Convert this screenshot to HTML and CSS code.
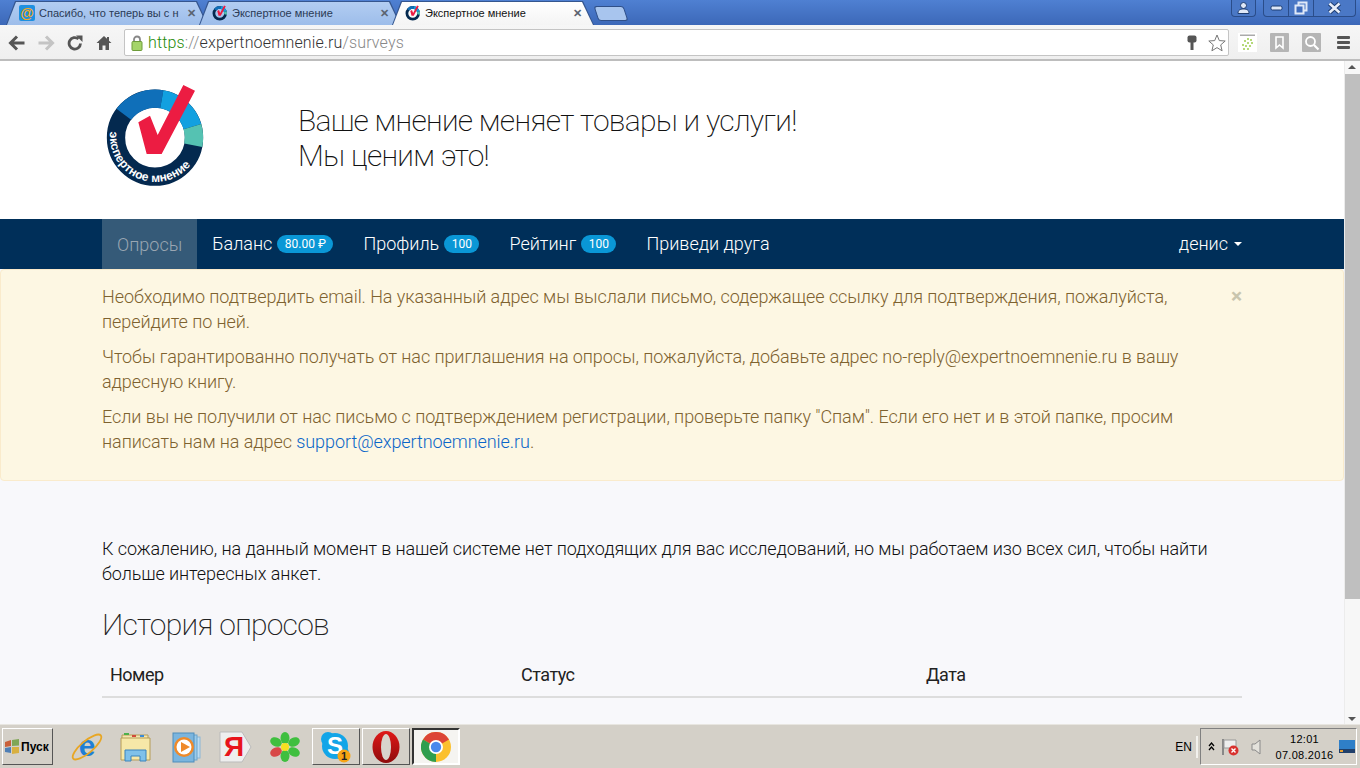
FILE: index.html
```html
<!DOCTYPE html>
<html lang="ru">
<head>
<meta charset="utf-8">
<title>Экспертное мнение</title>
<link rel="stylesheet" href="styles.css">
</head>
<body>
<svg class="defs" width="0" height="0">
  <symbol id="mark" viewBox="45 25 310 320">
    <circle cx="195" cy="191" r="117" fill="none" stroke="#04294f" stroke-width="55"/>
    <path d="M101.3 121A117 117 0 0 1 215.4 75.8" fill="none" stroke="#0f6fb9" stroke-width="55"/>
    <path d="M215.4 75.8A117 117 0 0 1 307.3 158" fill="none" stroke="#12a0e0" stroke-width="55"/>
    <path d="M307.3 158A117 117 0 0 1 309.9 213.4" fill="none" stroke="#55c2b2" stroke-width="55"/>
    <polygon points="145,145 180,125 203,183 280,33 315,50 215,240 170,240" fill="#ec1c42"/>
  </symbol>
  <linearGradient id="opera" x1="0" y1="0" x2="0" y2="1">
    <stop offset="0" stop-color="#e01818"/>
    <stop offset="1" stop-color="#8e0c0c"/>
  </linearGradient>
</svg>

<div class="tabstrip">
  <div class="tab">
    <span class="fav-mail">@</span>
    <span class="tab-title">Спасибо, что теперь вы с н</span>
    <span class="tab-x">✕</span>
  </div>
  <div class="tab">
    <svg class="fav"><use href="#mark"/></svg>
    <span class="tab-title">Экспертное мнение</span>
    <span class="tab-x">✕</span>
  </div>
  <div class="tab tab-active">
    <svg class="fav"><use href="#mark"/></svg>
    <span class="tab-title">Экспертное мнение</span>
    <span class="tab-x">✕</span>
  </div>
  <div class="tab-new"></div>
  <div class="win-spacer"></div>
  <div class="win-btn win-user">
    <svg width="13" height="12" viewBox="0 0 13 12"><circle cx="6.5" cy="3.5" r="3" fill="#dfe8f7" stroke="#1d3c70"/><path d="M1 11.5c0-3.5 2-4.5 5.500-4.500s5.500 1 5.500 4.500z" fill="#dfe8f7" stroke="#1d3c70"/></svg>
  </div>
  <div class="win-group">
    <div class="win-btn win-min"><svg width="13" height="6" viewBox="0 0 13 6"><rect x="1" y="1" width="11" height="4" rx="1.500" fill="#dfe8f7" stroke="#1d3c70"/></svg></div>
    <div class="win-btn win-max"><svg width="14" height="14" viewBox="0 0 14 14"><rect x="4.500" y="1.500" width="8" height="8" fill="none" stroke="#dfe8f7" stroke-width="2"/><rect x="1.500" y="4.500" width="8" height="8" fill="#3f6cbc" stroke="#dfe8f7" stroke-width="2"/></svg></div>
    <div class="win-btn win-close"><svg width="15" height="12" viewBox="0 0 15 12"><path d="M2.500 1.500l10 9M12.500 1.500l-10 9" stroke="#1d3c70" stroke-width="4.500"/><path d="M2.500 1.500l10 9M12.500 1.500l-10 9" stroke="#e6edf9" stroke-width="2.500"/></svg></div>
  </div>
</div>

<div class="toolbar">
  <svg class="tool-ic" width="18" height="16" viewBox="0 0 18 16"><path d="M9 1.500L2.500 8 9 14.500M3 8h13.500" fill="none" stroke="#555" stroke-width="3"/></svg>
  <svg class="tool-ic" width="18" height="16" viewBox="0 0 18 16"><path d="M9 1.500L15.500 8 9 14.500M15 8H1.500" fill="none" stroke="#c4c4c4" stroke-width="3"/></svg>
  <svg class="tool-ic" width="18" height="16" viewBox="0 0 18 16"><path d="M14.500 8.500A5.700 5.700 0 1 1 12.500 4" fill="none" stroke="#555" stroke-width="2.800"/><polygon points="10,0.500 16.500,0.500 16.500,7" fill="#555"/></svg>
  <svg class="tool-ic" width="18" height="16" viewBox="0 0 18 16"><path d="M9 1L1.500 8H4v7h3.500v-4.500h3V15H14V8h2.500L14 5.700V2h-2v1.800z" fill="#555"/></svg>
  <div class="omnibox">
    <svg class="lock" width="12" height="16" viewBox="0 0 12 16"><path d="M3 7V4.500a3 3 0 0 1 6 0V7" fill="none" stroke="#888" stroke-width="1.800"/><rect x="1" y="6.500" width="10" height="9" rx="1" fill="#a5d46a" stroke="#6e9c3a"/></svg>
    <span class="url"><span class="url-https">https</span><span class="url-path">://</span><span class="url-host">expertnoemnenie.ru</span><span class="url-path">/surveys</span></span>
    <svg class="omni-key" width="10" height="16" viewBox="0 0 10 16"><rect x="0.500" y="0.500" width="9" height="7" rx="2" fill="#555"/><rect x="3.500" y="6" width="3" height="9" fill="#555"/></svg>
    <svg class="omni-star" width="18" height="18" viewBox="0 0 18 18"><polygon points="9,1 11.300,6.600 17.200,7 12.700,10.900 14.100,16.800 9,13.600 3.900,16.800 5.300,10.900 0.800,7 6.700,6.600" fill="#fff" stroke="#777"/></svg>
  </div>
  <div class="ext ext-tree">
    <svg width="19" height="19" viewBox="0 0 19 19"><rect x="2" y="1.500" width="15" height="1.500" fill="#aaa"/><g fill="#9ccc4d"><circle cx="10" cy="6" r="1"/><circle cx="13" cy="7" r="1"/><circle cx="7" cy="8" r="1"/><circle cx="10" cy="10" r="1"/><circle cx="14" cy="10" r="1"/><circle cx="5" cy="12" r="1"/><circle cx="8" cy="13" r="1"/><circle cx="12" cy="13" r="1"/><circle cx="6" cy="16" r="1"/><circle cx="10" cy="16" r="1"/></g></svg>
  </div>
  <div class="ext ext-grey">
    <svg width="19" height="19" viewBox="0 0 19 19"><path d="M6 4h7v11l-3.500-3L6 15z" fill="none" stroke="#fff" stroke-width="1.600"/></svg>
  </div>
  <div class="ext ext-grey">
    <svg width="19" height="19" viewBox="0 0 19 19"><circle cx="8.500" cy="8.500" r="4.500" fill="none" stroke="#fff" stroke-width="1.800"/><path d="M12 12l4.500 4.500" stroke="#fff" stroke-width="2.200"/></svg>
  </div>
  <div class="menu-ic"><span></span><span></span><span></span></div>
</div>

<div class="viewport">
  <div class="page">
    <header class="site-head">
      <svg class="logo" viewBox="0 0 390 375" role="img" aria-label="Экспертное мнение">
        <use href="#mark" x="45" y="25" width="310" height="320"/>
        <path id="ring-text" d="M61 170A136 136 0 0 0 323 236" fill="none"/>
        <text class="logo-text"><textPath href="#ring-text" startOffset="3" textLength="350" lengthAdjust="spacing">экспертное мнение</textPath></text>
      </svg>
      <div class="slogan">Ваше мнение меняет товары и услуги!<br>Мы ценим это!</div>
    </header>

    <nav class="nav">
      <a class="nav-item nav-active">Опросы</a>
      <a class="nav-item">Баланс<span class="badge">80.00 ₽</span></a>
      <a class="nav-item">Профиль<span class="badge">100</span></a>
      <a class="nav-item">Рейтинг<span class="badge">100</span></a>
      <a class="nav-item">Приведи друга</a>
      <a class="nav-item nav-user">денис<span class="caret"></span></a>
    </nav>

    <div class="alert">
      <span class="alert-close">×</span>
      <p>Необходимо подтвердить email. На указанный адрес мы выслали письмо, содержащее ссылку для подтверждения, пожалуйста, перейдите по ней.</p>
      <p>Чтобы гарантированно получать от нас приглашения на опросы, пожалуйста, добавьте адрес no-reply@expertnoemnenie.ru в вашу адресную книгу.</p>
      <p>Если вы не получили от нас письмо с подтверждением регистрации, проверьте папку "Спам". Если его нет и в этой папке, просим написать нам на адрес <a class="alert-link">support@expertnoemnenie.ru</a>.</p>
    </div>

    <main class="main">
      <p class="lead">К сожалению, на данный момент в нашей системе нет подходящих для вас исследований, но мы работаем изо всех сил, чтобы найти больше интересных анкет.</p>
      <h2 class="title">История опросов</h2>
      <table class="history">
        <thead>
          <tr><th class="col-num">Номер</th><th class="col-status">Статус</th><th>Дата</th></tr>
        </thead>
      </table>
    </main>
  </div>
  <div class="scrollbar">
    <div class="sb-up"></div>
    <div class="sb-thumb"></div>
    <div class="sb-track"></div>
    <div class="sb-down"></div>
  </div>
</div>

<footer class="taskbar">
  <div class="start">
    <svg width="16" height="15" viewBox="0 0 16 15"><path d="M1 3l6-2v6l-6 1z" fill="#c9603a"/><path d="M8 1l7-1v6.500L8 7z" fill="#7fa655"/><path d="M1 9l6-1v6l-6-1z" fill="#4f7fb5"/><path d="M8 8l7 0v6l-7 1z" fill="#d8b040"/></svg>
    <span>Пуск</span>
  </div>
  <div class="quick">
    <svg width="34" height="34" viewBox="0 0 34 34"><text class="ie" x="17" y="26">e</text><ellipse cx="17" cy="17" rx="18" ry="6" transform="rotate(-40 17 17)" fill="none" stroke="#e8a623" stroke-width="1.800"/></svg>
  </div>
  <div class="quick">
    <svg width="34" height="34" viewBox="0 0 34 34"><path d="M3 5h26v4H3z" fill="#f4e6ad" stroke="#b59c56"/><rect x="5" y="3" width="5" height="2" fill="#4cb04c"/><rect x="13" y="5" width="4" height="2" fill="#d24a3a"/><rect x="21" y="5" width="4" height="2" fill="#3a8ad8"/><path d="M2 8h29v22H2z" fill="#f6e8a8" stroke="#b59c56"/><path d="M6 20h21v11h-6v-5h-9v5H6z" fill="#7fc1ea" stroke="#3a84bd"/></svg>
  </div>
  <div class="quick">
    <svg width="34" height="34" viewBox="0 0 34 34"><rect x="23" y="7" width="8" height="21" fill="#bcdcf2" stroke="#8ab6d6"/><rect x="19" y="5" width="9" height="25" fill="#9ccbea" stroke="#6ba4cc"/><rect x="4" y="3" width="21" height="29" fill="#7bb5de" stroke="#4f8dbb"/><circle cx="15" cy="17" r="10" fill="#ef8a2a"/><circle cx="15" cy="17" r="7.500" fill="#fff"/><polygon points="12,12 21,17 12,22" fill="#ef8a2a"/></svg>
  </div>
  <div class="quick">
    <svg width="34" height="34" viewBox="0 0 34 34"><path d="M2 2h22l9 15-9 15H2z" fill="#eeeeee" stroke="#bbb"/><text class="ya" x="6" y="26">Я</text></svg>
  </div>
  <div class="quick">
    <svg width="30" height="30" viewBox="0 0 30 30"><g fill="#3fbf3f"><ellipse cx="15" cy="6" rx="4.500" ry="6"/><ellipse cx="15" cy="24" rx="4.500" ry="6"/><ellipse cx="6" cy="10" rx="6" ry="4.500" transform="rotate(25 6 10)"/><ellipse cx="24" cy="10" rx="6" ry="4.500" transform="rotate(-25 24 10)"/><ellipse cx="24" cy="20" rx="6" ry="4.500" transform="rotate(25 24 20)"/></g><ellipse cx="6" cy="20" rx="6" ry="4.500" transform="rotate(-25 6 20)" fill="#d84848"/><circle cx="15" cy="15" r="4" fill="#f6e020"/></svg>
  </div>
  <div class="task-btn">
    <svg width="34" height="34" viewBox="0 0 34 34"><circle cx="9" cy="9" r="7" fill="#12a5e8"/><circle cx="23" cy="23" r="7" fill="#12a5e8"/><circle cx="16" cy="16" r="13" fill="#12a5e8"/><text class="sk" x="16" y="24">S</text><circle cx="25" cy="26" r="6.500" fill="#f7a414"/><text class="sk-badge" x="25" y="30">1</text></svg>
  </div>
  <div class="task-btn">
    <svg width="28" height="34" viewBox="0 0 28 34"><ellipse cx="14" cy="17" rx="13.500" ry="16" fill="url(#opera)"/><ellipse cx="14" cy="17" rx="5" ry="13" fill="#d8d4cc"/></svg>
  </div>
  <div class="task-btn task-pressed">
    <svg width="30" height="30" viewBox="0 0 30 30"><circle cx="15" cy="15" r="15" fill="#fbc02d"/><path d="M15 15L2 7.500A15 15 0 0 1 28 7.500z" fill="#dc4537"/><path d="M15 15L2 7.500A15 15 0 0 0 15 30z" fill="#2f9e4f"/><circle cx="15" cy="15" r="7" fill="#fff"/><circle cx="15" cy="15" r="5.200" fill="#4a88ec"/></svg>
  </div>
  <div class="task-spacer"></div>
  <span class="lang">EN</span>
  <div class="tray">
    <svg class="tray-chev" width="7" height="9" viewBox="0 0 7 9"><path d="M1 4l2.500-3L6 4M1 8l2.500-3L6 8" fill="none" stroke="#000" stroke-width="1.300"/></svg>
    <svg class="tray-flag" width="18" height="18" viewBox="0 0 18 18"><path d="M2 1v16" stroke="#888" stroke-width="2"/><path d="M3 2h12v8H3z" fill="#eeeeee" stroke="#999"/><circle cx="12.500" cy="12.500" r="5" fill="#d8322f"/><path d="M10.500 10.500l4 4M14.500 10.500l-4 4" stroke="#fff" stroke-width="1.400"/></svg>
    <svg class="tray-vol" width="10" height="16" viewBox="0 0 10 16"><path d="M1 5h3l5-4v14l-5-4H1z" fill="#e4e2dc" stroke="#8a8a8a"/></svg>
    <div class="clock"><span>12:01</span><span>07.08.2016</span></div>
    <svg class="tray-desk" width="16" height="13" viewBox="0 0 16 13"><rect width="16" height="13" fill="#2f7fc8"/><rect y="9" width="16" height="4" fill="#1f3f6a"/><rect x="1" y="10" width="3" height="2" fill="#e8a030"/></svg>
  </div>
</footer>
</body>
</html>
```
FILE: styles.css
```css
* { box-sizing: border-box; }
html, body { margin: 0; height: 100%; }
body {
  width: 1360px;
  height: 768px;
  overflow: hidden;
  display: flex;
  flex-direction: column;
  font-family: Roboto, "Noto Sans", sans-serif;
  font-weight: 300;
  background: #f8f8fb;
  color: #333;
}
.defs { position: absolute; }

/* Browser tab strip */
.tabstrip {
  flex: 0 0 25px;
  display: flex;
  align-items: flex-start;
  padding: 1px 4px 0 6px;
  background: linear-gradient(#4f80d2, #3c68b8);
}
.tab {
  position: relative;
  flex: 0 0 202px;
  height: 24px;
  margin-right: -9px;
  display: flex;
  align-items: center;
  padding: 0 12px 0 13px;
  font: 400 11px "Liberation Sans", Arial, sans-serif;
  color: #2a3a55;
  background: #35568f;
  clip-path: polygon(0 100%, 9px 0, calc(100% - 11px) 0, 100% 100%);
}
.tab::before {
  content: "";
  position: absolute;
  inset: 1px 1px 0;
  background: linear-gradient(#b2cdf2, #9dbdea);
  clip-path: polygon(0 100%, 9px 0, calc(100% - 11px) 0, 100% 100%);
}
.tab > * { position: relative; }
.tab-active { color: #111; z-index: 2; }
.tab-active::before { background: linear-gradient(#fff, #f4f4f4); }
.fav, .fav-mail { flex: 0 0 16px; width: 16px; height: 16px; margin-right: 4px; }
.fav-mail {
  background: #1e90e0;
  color: #f7a81b;
  font: 700 14px/16px "Liberation Sans", sans-serif;
  text-align: center;
  border-radius: 2px;
}
.tab-title { flex: 1; white-space: nowrap; overflow: hidden; }
.tab-x { font-size: 11px; font-weight: 700; color: #5b6470; }
.tab-new {
  flex: 0 0 30px;
  height: 15px;
  margin: 5px 0 0 11px;
  background: #a8c5ee;
  border: 1px solid #2f4f88;
  border-radius: 3px;
  transform: skewX(18deg);
}
.win-spacer { flex: 1; }
.win-btn {
  height: 17px;
  display: flex;
  align-items: center;
  justify-content: center;
  margin-top: -1px;
}
.win-user {
  width: 25px;
  margin-right: 7px;
  border: 1px solid #2a4d8a;
  border-top: 0;
  border-radius: 0 0 4px 4px;
  background: #4a78c6;
}
.win-group {
  display: flex;
  border: 1px solid #2a4d8a;
  border-top: 0;
  border-radius: 0 0 4px 4px;
  background: #4a78c6;
  margin-top: -1px;
}
.win-group .win-btn { margin-top: 0; height: 16px; }
.win-min { width: 25px; border-right: 1px solid #2a4d8a; }
.win-max { width: 25px; border-right: 1px solid #2a4d8a; }
.win-close { width: 41px; }

/* Browser toolbar */
.toolbar {
  flex: 0 0 36px;
  display: flex;
  align-items: center;
  padding: 1px 7px 0 8px;
  background: linear-gradient(#f6f6f6, #efefef);
  border-bottom: 2px solid #bdbdbd;
}
.tool-ic { margin-right: 11px; flex: none; }
.omnibox {
  flex: 0 0 1105px;
  height: 27px;
  display: flex;
  align-items: center;
  padding: 0 2px 0 6px;
  background: #fff;
  border: 1px solid #c4c4c4;
  border-radius: 2px;
}
.lock { flex: none; margin-right: 5px; }
.url { flex: 1; font-size: 16px; letter-spacing: .15px; white-space: nowrap; }
.url-https { color: #1f8a0a; }
.url-path { color: #888; }
.url-host { color: #333; }
.omni-key { margin-right: 11px; }
.ext { width: 19px; height: 19px; display: flex; }
.ext-tree { margin-left: 9px; background: #fff; }
.ext-grey { background: #b5b5b5; border-radius: 1px; margin-left: 13px; }
.menu-ic { margin-left: 16px; width: 13px; display: flex; flex-direction: column; gap: 2px; }
.menu-ic span { height: 3px; background: #555; border-radius: 1px; }

/* Page */
.viewport { flex: 0 0 663px; display: flex; overflow: hidden; }
.page { flex: 0 0 1344px; overflow: hidden; }
.site-head {
  height: 158px;
  background: #fff;
  display: flex;
  align-items: flex-start;
  padding: 13px 0 0 90px;
}
.logo { width: 130px; height: 125px; flex: none; }
.logo-text { font: 700 36px "Liberation Sans", Roboto, sans-serif; fill: #fff; }
.slogan {
  margin: 29px 0 0 78px;
  font-size: 30px;
  line-height: 35px;
  font-weight: 200;
  letter-spacing: -.72px;
  color: #111;
}
.nav {
  height: 50px;
  display: flex;
  padding: 0 102px 1px;
  background: #002f59;
  font-size: 18px;
}
.nav-item {
  display: flex;
  align-items: center;
  gap: 5px;
  padding: 0 15px;
  color: #fff;
}
.nav-active { background: #355a78; color: #9aa6b2; margin-bottom: -1px; }
.nav-user { margin-left: auto; padding-right: 0; gap: 6px; }
.badge {
  display: inline-block;
  padding: 0 7.500px;
  height: 18px;
  line-height: 18px;
  border-radius: 9px;
  background: #0a97d6;
  color: #fff;
  font-size: 12px;
  font-weight: 400;
}
.caret {
  width: 0;
  height: 0;
  border: 4px solid transparent;
  border-top-color: #fff;
  border-bottom: 0;
}
.alert {
  position: relative;
  height: 212px;
  padding: 14px 101px;
  background: #fdf7e3;
  border: 1px solid #faebcc;
  border-radius: 4px;
  color: #7e622f;
  font-size: 18px;
  line-height: 25px;
  letter-spacing: -.07px;
}
.alert p { margin: 0 0 10px; }
.alert-link { color: #0a66c8; }
.alert-close {
  position: absolute;
  top: 14px;
  right: 101px;
  font: 700 21px/25px Roboto, sans-serif;
  color: #c9c5ae;
}
.main { padding: 55px 102px 0; }
.lead { margin: 0; font-size: 18px; line-height: 25px; letter-spacing: -.09px; color: #111; }
.title {
  margin: 21px 0 12px;
  font-size: 30px;
  line-height: 36px;
  font-weight: 200;
  letter-spacing: -.75px;
  color: #222;
}
.history { width: 100%; border-collapse: collapse; table-layout: fixed; }
.history th {
  padding: 7px 8px 9px;
  text-align: left;
  font-size: 18px;
  line-height: 25px;
  font-weight: 400;
  letter-spacing: -.5px;
  color: #222;
  border-bottom: 2px solid #ddd;
}
.col-num { width: 411px; }
.col-status { width: 405px; }

/* Scrollbar */
.scrollbar {
  flex: 0 0 16px;
  display: flex;
  flex-direction: column;
  align-items: stretch;
  background: #f7f7f7;
  border-left: 1px solid #ececec;
}
.sb-up, .sb-down { flex: 0 0 13px; position: relative; }
.sb-up::after, .sb-down::after {
  content: "";
  position: absolute;
  left: 3px;
  border: 4px solid transparent;
}
.sb-up::after { top: 4px; border-top: 0; border-bottom-color: #555; }
.sb-down::after { bottom: 3px; border-bottom: 0; border-top-color: #555; }
.sb-thumb { flex: 0 0 525px; background: #bfbfbf; }
.sb-track { flex: 1; }

/* Taskbar */
.taskbar {
  flex: 1;
  display: flex;
  align-items: center;
  padding: 0 3px 0 2px;
  background: #d4d0c8;
  border-top: 1px solid #e8e6e1;
  font: 400 12px "Liberation Sans", Arial, sans-serif;
  color: #000;
}
.start {
  flex: 0 0 51px;
  height: 37px;
  margin-right: 9px;
  display: flex;
  align-items: center;
  gap: 1px;
  padding-left: 1px;
  font-weight: 700;
  font-size: 12px;
  border: 1px solid;
  border-color: #fff #555 #555 #fff;
}
.quick { flex: 0 0 49.500px; display: flex; justify-content: center; align-items: center; }
.task-btn {
  flex: 0 0 48px;
  height: 37px;
  margin-left: 2px;
  display: flex;
  align-items: center;
  justify-content: center;
  border: 1px solid;
  border-color: #fff #555 #555 #fff;
}
.task-pressed { background: #f5f4f1; border-color: #333 #fff #fff #333; border-width: 2px; }
.ie { font: 700 30px "Liberation Sans", sans-serif; fill: #1f7fd6; text-anchor: middle; }
.ya { font: 700 28px "Liberation Sans", sans-serif; fill: #e8141c; }
.sk { font: 700 24px "Liberation Sans", sans-serif; fill: #fff; text-anchor: middle; }
.sk-badge { font: 700 11px "Liberation Sans", sans-serif; fill: #222; text-anchor: middle; }
.task-spacer { flex: 1; }
.lang {
  padding-right: 4px;
  margin-right: 2px;
  height: 22px;
  line-height: 22px;
  border-right: 2px solid #f2f1ed;
}
.tray {
  flex: 0 0 157px;
  height: 37px;
  display: flex;
  align-items: center;
  padding: 0 1px 0 7px;
  border: 1px solid;
  border-color: #808080 #fff #fff #808080;
}
.tray-chev { margin-right: 6px; }
.tray-flag { margin-right: 12px; }
.clock {
  flex: 1;
  display: flex;
  flex-direction: column;
  align-items: center;
  font-size: 11px;
  line-height: 16px;
  letter-spacing: .3px;
  padding-left: 9px;
}
.tray-desk { margin-top: -1px; }
```
